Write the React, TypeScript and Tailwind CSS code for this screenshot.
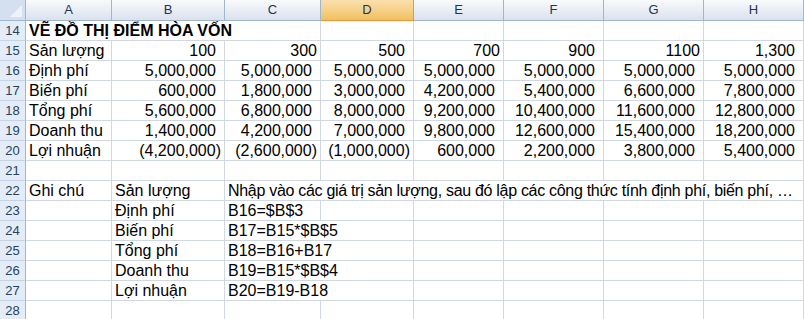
const cols = ['A', 'B', 'C', 'D', 'E', 'F', 'G', 'H']

type Cell = { text?: string; align?: 'l' | 'r'; pad?: 'n' | 'w'; span?: number; bold?: boolean; tight?: boolean }

const L = (text: string, span?: number): Cell => ({ text, align: 'l', span })
const N = (text: string): Cell => ({ text, align: 'r', pad: 'n' })
const W = (text: string): Cell => ({ text, align: 'r', pad: 'w' })
const E: Cell = {}

const rows: { n: number; cells: Cell[] }[] = [
  { n: 14, cells: [{ text: 'VẼ ĐỒ THỊ ĐIỂM HÒA VỐN', align: 'l', span: 3, bold: true }, E, E, E, E, E] },
  { n: 15, cells: [L('Sản lượng'), W('100'), N('300'), W('500'), N('700'), W('900'), N('1100'), W('1,300')] },
  { n: 16, cells: [L('Định phí'), W('5,000,000'), W('5,000,000'), W('5,000,000'), W('5,000,000'), W('5,000,000'), W('5,000,000'), W('5,000,000')] },
  { n: 17, cells: [L('Biến phí'), W('600,000'), W('1,800,000'), W('3,000,000'), W('4,200,000'), W('5,400,000'), W('6,600,000'), W('7,800,000')] },
  { n: 18, cells: [L('Tổng phí'), W('5,600,000'), W('6,800,000'), W('8,000,000'), W('9,200,000'), W('10,400,000'), W('11,600,000'), W('12,800,000')] },
  { n: 19, cells: [L('Doanh thu'), W('1,400,000'), W('4,200,000'), W('7,000,000'), W('9,800,000'), W('12,600,000'), W('15,400,000'), W('18,200,000')] },
  { n: 20, cells: [L('Lợi nhuận'), N('(4,200,000)'), N('(2,600,000)'), N('(1,000,000)'), W('600,000'), W('2,200,000'), W('3,800,000'), W('5,400,000')] },
  { n: 21, cells: [E, E, E, E, E, E, E, E] },
  {
    n: 22,
    cells: [
      L('Ghi chú'),
      L('Sản lượng'),
      { text: 'Nhập vào các giá trị sản lượng, sau đó lập các công thức tính định phí, biến phí, …', align: 'l', span: 6, tight: true },
    ],
  },
  { n: 23, cells: [E, L('Định phí'), L('B16=$B$3'), E, E, E, E, E] },
  { n: 24, cells: [E, L('Biến phí'), L('B17=B15*$B$5', 2), E, E, E, E] },
  { n: 25, cells: [E, L('Tổng phí'), L('B18=B16+B17', 2), E, E, E, E] },
  { n: 26, cells: [E, L('Doanh thu'), L('B19=B15*$B$4', 2), E, E, E, E] },
  { n: 27, cells: [E, L('Lợi nhuận'), L('B20=B19-B18', 2), E, E, E, E] },
  { n: 28, cells: [E, E, E, E, E, E, E, E] },
]

const spanClass: Record<number, string> = { 1: '', 2: 'col-span-2', 3: 'col-span-3', 6: 'col-span-6' }

function SheetCell({ cell }: { cell: Cell }) {
  const align = cell.align === 'r' ? 'justify-end' : 'justify-start'
  const pad = cell.align === 'r' ? (cell.pad === 'w' ? 'pr-[8px]' : 'pr-[3px]') : 'pl-[3px]'
  return (
    <div
      className={`flex h-[20px] items-end overflow-visible whitespace-nowrap border-r border-b border-[#d0d7e5] bg-white ${align} ${pad} ${spanClass[cell.span ?? 1]}`}
    >
      <span
        className={`leading-[19px] text-[16px] text-black ${cell.bold ? 'font-bold' : ''} ${cell.tight ? 'tracking-[-0.3px]' : ''}`}
      >
        {cell.text}
      </span>
    </div>
  )
}

export default function App() {
  return (
    <div className="h-[319px] w-[804px] overflow-hidden bg-white font-['Liberation_Sans',Arial,sans-serif]">
      <div className="grid grid-cols-[26px_86px_113px_96px_93px_90px_100px_100px_100px]">
        <div className="relative h-[21px] border-r border-b border-[#9eb6ce] bg-[#d4e0f0]">
          <svg className="absolute right-[3px] bottom-[3px]" width="12" height="12" viewBox="0 0 12 12">
            <polygon points="12,0 12,12 0,12" fill="#eef3fa" />
          </svg>
        </div>
        {cols.map((c) =>
          c === 'D' ? (
            <div
              key={c}
              className="flex h-[21px] items-center justify-center border-r border-b border-[#f29436] bg-linear-to-b from-[#fae0ae] to-[#f1c15f] text-[13px] text-[#1f3355]"
            >
              {c}
            </div>
          ) : (
            <div
              key={c}
              className="flex h-[21px] items-center justify-center border-r border-b border-[#9eb6ce] bg-linear-to-b from-[#f8fafc] to-[#dae2ed] text-[13px] text-[#1f3355]"
            >
              {c}
            </div>
          ),
        )}
        {rows.map((r) => (
          <div key={r.n} className="contents">
            <div className="flex h-[20px] items-center justify-center border-r border-b border-r-[#9eb6ce] border-b-[#c5d3e6] bg-[#e4ecf7] text-[13px] text-[#27415f]">
              {r.n}
            </div>
            {r.cells.map((cell, i) => (
              <SheetCell key={i} cell={cell} />
            ))}
          </div>
        ))}
      </div>
    </div>
  )
}
